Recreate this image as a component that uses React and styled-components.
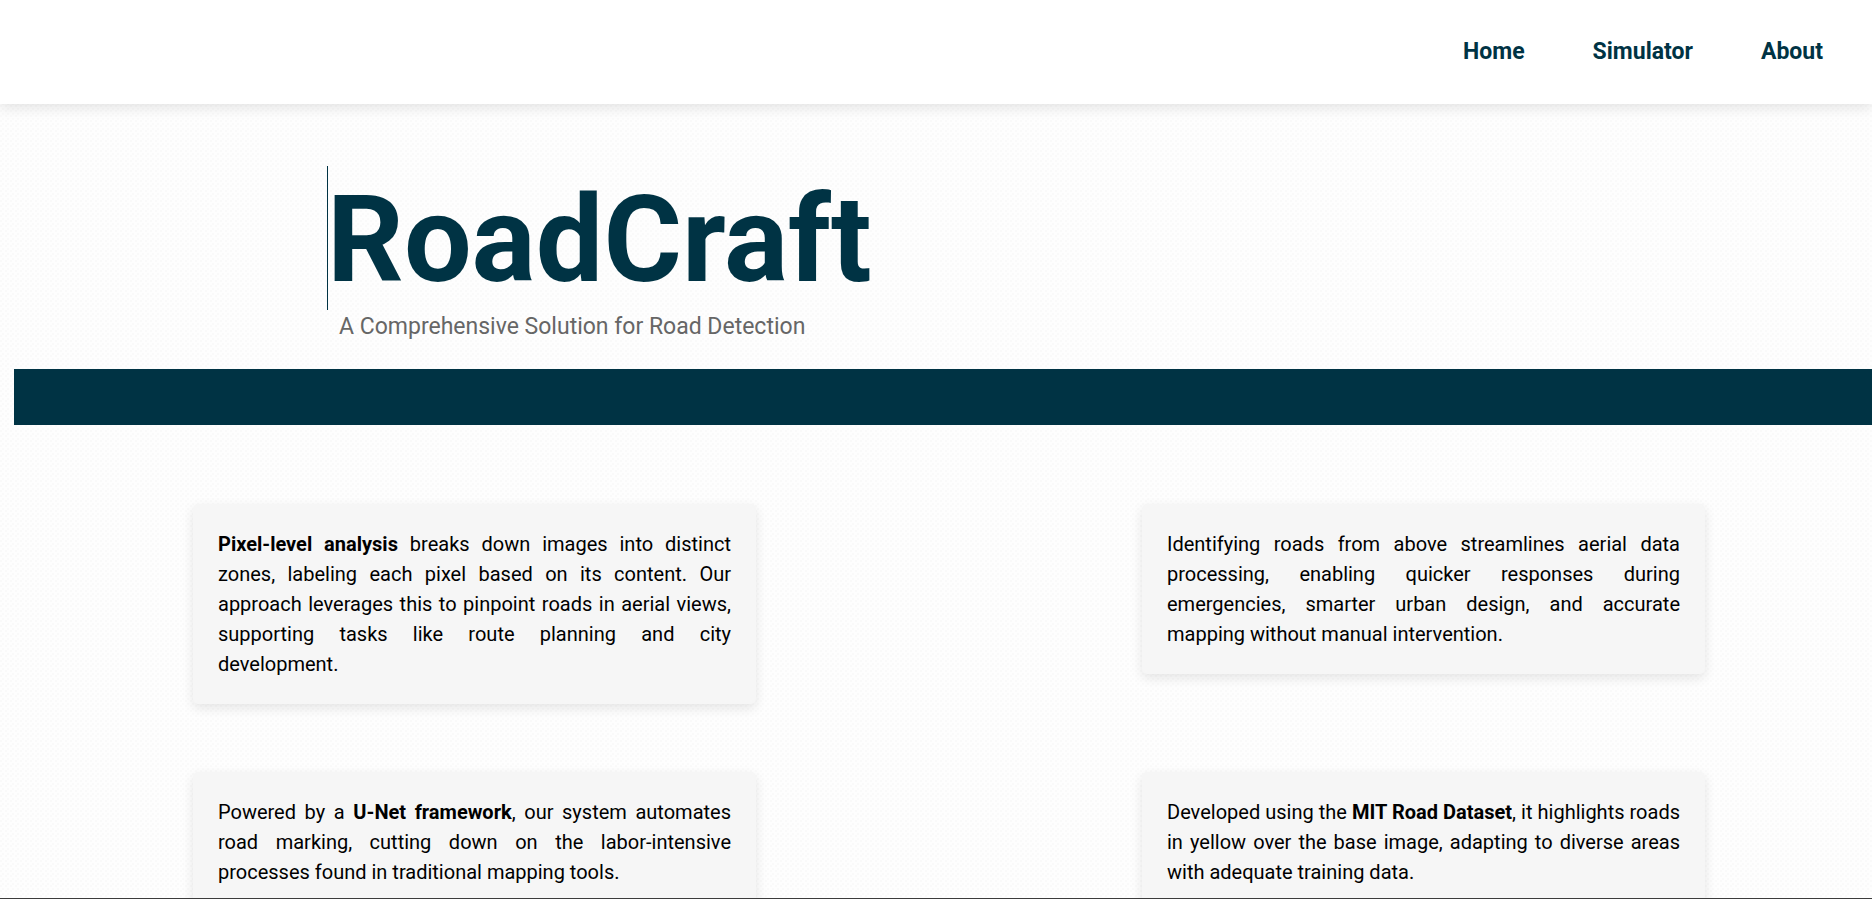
import React from "react";
import styled, { createGlobalStyle } from "styled-components";

const GlobalStyle = createGlobalStyle`
  * { box-sizing: border-box; }
  html, body { margin: 0; overflow: hidden; }
  body {
    height: 100vh;
    background-color: #fefefe;
    background-image:
      radial-gradient(circle at 1px 1px, #fafafa 1px, transparent 1px),
      radial-gradient(circle at 3px 4px, #fafafa 1px, transparent 1px);
    background-size: 5px 5px;
    color: #000;
    font-family: Roboto, "Liberation Sans", sans-serif;
  }
`;

const Page = styled.div`
  height: 100vh;
  overflow: hidden;
  border-bottom: 1px solid #3c3c3c;
`;

const Header = styled.header`
  display: flex;
  align-items: center;
  justify-content: flex-end;
  height: 104px;
  padding: 0 49px;
  background: #fff;
  box-shadow: 0 4px 12px rgba(0, 0, 0, 0.1);
`;

const Nav = styled.nav`
  display: flex;
  gap: 68px;
`;

const NavLink = styled.a`
  color: #003344;
  font-size: 23px;
  font-weight: 700;
  line-height: 30px;
  text-decoration: none;
`;

const Hero = styled.section`
  padding: 62px 0 0 327px;
`;

const Title = styled.h1`
  position: relative;
  width: max-content;
  margin: 0;
  color: #003344;
  font-size: 120px;
  font-weight: 700;
  line-height: 148px;

  &::before {
    content: "";
    position: absolute;
    inset: 0 auto 4px 0;
    border-left: 1px solid #003344;
  }
`;

const Subtitle = styled.p`
  margin: 0;
  padding: 0 12px;
  color: #666;
  font-size: 23px;
  line-height: 26px;
`;

const Band = styled.div`
  height: 56px;
  margin: 29px 0 0 14px;
  background: #003344;
`;

const Features = styled.main`
  display: grid;
  grid-template-columns: 1fr 1fr;
  align-items: start;
  gap: 68px 386px;
  padding: 79px 167px 79px 193px;
`;

const Card = styled.article`
  padding: 25px;
  border-radius: 5px;
  background: #f6f6f6;
  box-shadow: 0 4px 12px rgba(0, 0, 0, 0.1);
`;

const CardText = styled.p`
  margin: 0;
  font-size: 20px;
  line-height: 30px;
  text-align: justify;
`;

export default function App() {
  return (
    <Page>
      <GlobalStyle />
      <Header>
        <Nav>
          <NavLink href="#home">Home</NavLink>
          <NavLink href="#simulator">Simulator</NavLink>
          <NavLink href="#about">About</NavLink>
        </Nav>
      </Header>
      <Hero>
        <Title>RoadCraft</Title>
        <Subtitle>A Comprehensive Solution for Road Detection</Subtitle>
      </Hero>
      <Band />
      <Features>
        <Card>
          <CardText>
            <strong>Pixel-level analysis</strong> breaks down images into distinct
            zones, labeling each pixel based on its content. Our approach
            leverages this to pinpoint roads in aerial views, supporting tasks
            like route planning and city development.
          </CardText>
        </Card>
        <Card>
          <CardText>
            Identifying roads from above streamlines aerial data processing,
            enabling quicker responses during emergencies, smarter urban design,
            and accurate mapping without manual intervention.
          </CardText>
        </Card>
        <Card>
          <CardText>
            Powered by a <strong>U-Net framework</strong>, our system automates
            road marking, cutting down on the labor-intensive processes found in
            traditional mapping tools.
          </CardText>
        </Card>
        <Card>
          <CardText>
            Developed using the <strong>MIT Road Dataset</strong>, it highlights
            roads in yellow over the base image, adapting to diverse areas with
            adequate training data.
          </CardText>
        </Card>
      </Features>
    </Page>
  );
}
